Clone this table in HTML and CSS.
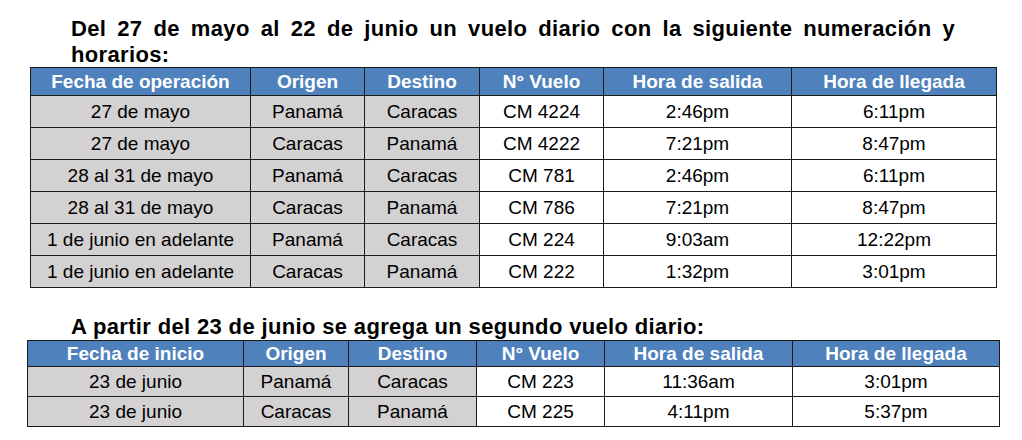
FILE: index.html
```html
<!DOCTYPE html>
<html lang="es">
<head>
<meta charset="utf-8">
<link rel="stylesheet" href="styles.css">
</head>
<body>
<div class="page">
  <p class="title title-one">Del 27 de mayo al 22 de junio un vuelo diario con la siguiente numeración y horarios:</p>
  <table class="sched sched-one">
    <colgroup>
      <col class="c1a"><col class="c2a"><col class="c3a"><col class="c4a"><col class="c5a"><col class="c6a">
    </colgroup>
    <thead>
      <tr><th>Fecha de operación</th><th>Origen</th><th>Destino</th><th>N° Vuelo</th><th>Hora de salida</th><th>Hora de llegada</th></tr>
    </thead>
    <tbody>
      <tr><td class="g">27 de mayo</td><td class="g">Panamá</td><td class="g">Caracas</td><td>CM 4224</td><td>2:46pm</td><td>6:11pm</td></tr>
      <tr><td class="g">27 de mayo</td><td class="g">Caracas</td><td class="g">Panamá</td><td>CM 4222</td><td>7:21pm</td><td>8:47pm</td></tr>
      <tr><td class="g">28 al 31 de mayo</td><td class="g">Panamá</td><td class="g">Caracas</td><td>CM 781</td><td>2:46pm</td><td>6:11pm</td></tr>
      <tr><td class="g">28 al 31 de mayo</td><td class="g">Caracas</td><td class="g">Panamá</td><td>CM 786</td><td>7:21pm</td><td>8:47pm</td></tr>
      <tr><td class="g">1 de junio en adelante</td><td class="g">Panamá</td><td class="g">Caracas</td><td>CM 224</td><td>9:03am</td><td>12:22pm</td></tr>
      <tr><td class="g">1 de junio en adelante</td><td class="g">Caracas</td><td class="g">Panamá</td><td>CM 222</td><td>1:32pm</td><td>3:01pm</td></tr>
    </tbody>
  </table>
  <p class="title title-two">A partir del 23 de junio se agrega un segundo vuelo diario:</p>
  <table class="sched sched-two">
    <colgroup>
      <col class="c1b"><col class="c2b"><col class="c3b"><col class="c4b"><col class="c5b"><col class="c6b">
    </colgroup>
    <thead>
      <tr><th>Fecha de inicio</th><th>Origen</th><th>Destino</th><th>N° Vuelo</th><th>Hora de salida</th><th>Hora de llegada</th></tr>
    </thead>
    <tbody>
      <tr><td class="g">23 de junio</td><td class="g">Panamá</td><td class="g">Caracas</td><td>CM 223</td><td>11:36am</td><td>3:01pm</td></tr>
      <tr><td class="g">23 de junio</td><td class="g">Caracas</td><td class="g">Panamá</td><td>CM 225</td><td>4:11pm</td><td>5:37pm</td></tr>
    </tbody>
  </table>
</div>
</body>
</html>
```
FILE: styles.css
```css
html, body {
  margin: 0;
  padding: 0;
  background: #ffffff;
}
.page {
  font-family: "Liberation Sans", Arial, sans-serif;
  color: #000;
  display: flex;
  flex-direction: column;
}
.title {
  margin: 0;
  font-weight: bold;
  font-size: 22px;
  line-height: 26px;
  letter-spacing: 0.35px;
  text-align: justify;
}
.title-one {
  margin-top: 16px;
  margin-left: 71px;
  width: 884px;
}
.title-two {
  margin-top: 26px;
  margin-left: 71px;
}
.sched {
  border-collapse: collapse;
  table-layout: fixed;
  font-size: 19px;
}
.sched-one {
  margin-top: -1px;
  margin-left: 30px;
  width: 966px;
}
.sched-two {
  margin-top: 0;
  margin-left: 27px;
  width: 972px;
}
.sched th, .sched td {
  border: 1px solid #1b1b1b;
  padding: 0;
  text-align: center;
  white-space: nowrap;
}
.sched th {
  background: #4f81bd;
  color: #ffffff;
  font-weight: bold;
}
.sched td {
  background: #ffffff;
}
.sched td.g {
  background: #d3d1d2;
}
.sched-one thead tr { height: 28px; }
.sched-one tbody tr { height: 32px; }
.sched-two thead tr { height: 26px; }
.sched-two tbody tr { height: 30px; }

.c1a { width: 220px; }
.c2a { width: 114px; }
.c3a { width: 115px; }
.c4a { width: 124px; }
.c5a { width: 188px; }
.c6a { width: 205px; }

.c1b { width: 216px; }
.c2b { width: 105px; }
.c3b { width: 128px; }
.c4b { width: 128px; }
.c5b { width: 188px; }
.c6b { width: 207px; }
```
